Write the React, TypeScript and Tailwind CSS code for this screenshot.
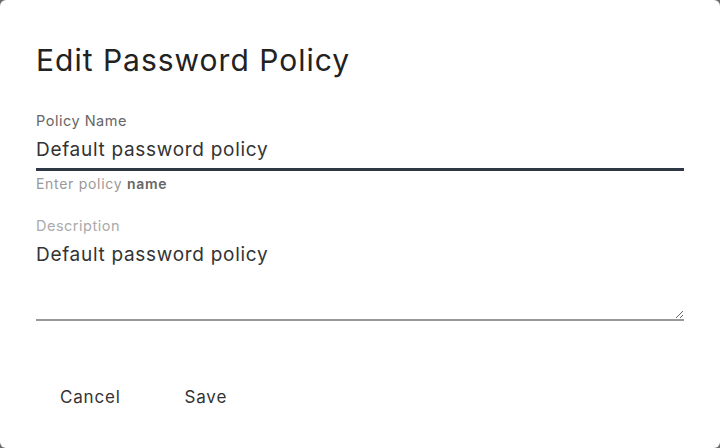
import { useState } from "react";

export default function App() {
  const [name, setName] = useState("Default password policy");
  const [description, setDescription] = useState("Default password policy");

  return (
    <div className="h-[448px] w-[720px] bg-[#6b6b6b]">
      <div
        className="flex h-full w-full flex-col rounded-[6px] bg-white px-[36px] pt-[40px] text-[#222]"
        style={{ fontFamily: "Inter, 'Noto Sans', sans-serif" }}
      >
        <h1 className="text-[30px] leading-[40px] font-normal tracking-[1px] text-[#222]">
          Edit Password Policy
        </h1>

        {/* Policy name */}
        <div className="mt-[32px] flex flex-col">
          <label htmlFor="policy-name" className="text-[14.5px] leading-[18px] tracking-[0.5px] text-[#666]">
            Policy Name
          </label>
          <input
            id="policy-name"
            value={name}
            onChange={(e) => setName(e.target.value)}
            className="mt-[4px] h-[37px] border-b-[3px] border-[#2f3943] bg-transparent pb-[4px] text-[19px] tracking-[0.7px] text-[#333] outline-none"
          />
          <p className="mt-[5px] text-[14px] leading-[16px] tracking-[0.7px] text-[#999]">
            Enter policy <span className="font-semibold text-[#666]">name</span>
          </p>
        </div>

        {/* Description */}
        <div className="mt-[25px] flex flex-col">
          <label htmlFor="policy-description" className="text-[14.5px] leading-[18px] tracking-[0.5px] text-[#aaa]">
            Description
          </label>
          <textarea
            id="policy-description"
            value={description}
            onChange={(e) => setDescription(e.target.value)}
            className="h-[86px] resize-y border-b-2 border-[#999] bg-transparent pt-[7px] text-[19px] leading-[26px] tracking-[0.7px] text-[#333] outline-none"
          />
        </div>

        <div className="mt-[57px] flex items-center gap-[16px]">
          <button className="rounded px-[24px] py-[6px] text-[17px] leading-[26px] tracking-[0.8px] text-[#333]">
            Cancel
          </button>
          <button className="rounded px-[24px] py-[6px] text-[17px] leading-[26px] tracking-[0.8px] text-[#333]">
            Save
          </button>
        </div>
      </div>
    </div>
  );
}
